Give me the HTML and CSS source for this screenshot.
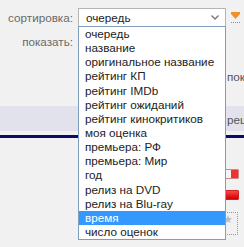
FILE: index.html
```html
<!DOCTYPE html>
<html lang="ru">
<head>
  <meta charset="UTF-8" />
  <title>Сортировка</title>
  <link rel="stylesheet" href="styles.css">
</head>
<body>

  <div class="page">
    <div class="filters">
      <div class="row">
        <span class="label">сортировка:</span>
        <div class="select">
          <span>очередь</span>
          <svg class="chevron" width="8" height="5" viewBox="0 0 8 5"><path d="M0.5 0.5 L4 4 L7.5 0.5" fill="none" stroke="#777" stroke-width="1.4"/></svg>
        </div>
        <span class="sort-dir">
          <svg width="9" height="8" viewBox="0 0 9 8"><rect x="0" y="0" width="9" height="2" fill="#f0902a"/><path d="M0 2 L9 2 L4.5 7 Z" fill="#f0902a"/></svg>
        </span>
      </div>
      <div class="row row-show">
        <span class="label">показать:</span>
      </div>
      <div class="row row-cut">
        <span class="cut">пока</span>
      </div>
    </div>

    <div class="band"><span class="cut">рец</span></div>
    <div class="rule"></div>

    <div class="items">
      <div class="bar bar-light"></div>
      <div class="bar bar-red"></div>
      <div class="star-box">★</div>
    </div>

    <ul class="dropdown">
      <li>очередь</li>
      <li>название</li>
      <li>оригинальное название</li>
      <li>рейтинг КП</li>
      <li>рейтинг IMDb</li>
      <li>рейтинг ожиданий</li>
      <li>рейтинг кинокритиков</li>
      <li>моя оценка</li>
      <li>премьера: РФ</li>
      <li>премьера: Мир</li>
      <li>год</li>
      <li>релиз на DVD</li>
      <li>релиз на Blu-ray</li>
      <li class="active">время</li>
      <li>число оценок</li>
    </ul>
  </div>

</body>
</html>
```

FILE: styles.css
```css
body {
  margin: 0;
  font-family: Arial, "Liberation Sans", sans-serif;
  font-size: 11.7px;
  background: #f1f1f1;
}

.page {
  position: relative;
  height: 247px;
  overflow: hidden;
}

.filters {
  padding-top: 8px;
}

.row {
  display: flex;
  align-items: center;
  height: 19px;
}

.label {
  width: 73px;
  text-align: right;
  color: #6a6a6a;
}

.select {
  margin-left: 5px;
  height: 17px;
  width: 133px;
  border: 1px solid #b4b4b4;
  background: #fff;
  display: flex;
  align-items: center;
  justify-content: space-between;
  padding: 0 6px 0 7px;
  color: #222;
}

.chevron {
  display: block;
}

.sort-dir {
  margin-left: 5px;
  padding-bottom: 2px;
  border-bottom: 1px dotted #c08050;
  line-height: 0;
}

.row-show {
  margin-top: 7px;
  height: 15px;
}

.row-cut {
  margin-top: 20px;
  height: 15px;
}

.cut {
  margin-left: 227px;
  color: #555;
  white-space: nowrap;
}

.band {
  margin-top: 22px;
  height: 25px;
  background: #e2e2ec;
  display: flex;
  align-items: center;
  padding-top: 1px;
  box-sizing: border-box;
}

.rule {
  margin-top: 4px;
  height: 3px;
  background: #0b0b6b;
}

.items {
  padding: 31px 0 0 200px;
}

.bar {
  width: 39px;
  height: 10px;
  border: 1px solid #c22;
  box-sizing: border-box;
  border-radius: 1px;
}

.bar-light {
  background: linear-gradient(to right, #f4f4f4 0, #f4f4f4 80%, #e33 80%);
  border-color: #c88;
}

.bar-red {
  margin-top: 11px;
  background: linear-gradient(#f44, #c00);
}

.star-box {
  margin-top: 12px;
  width: 38px;
  height: 23px;
  border: 1px dotted #999;
  color: #bbb;
  text-align: right;
  padding-right: 4px;
  box-sizing: border-box;
  font-size: 11px;
}

.dropdown {
  position: absolute;
  left: 78px;
  top: 26px;
  width: 146px;
  margin: 0;
  padding: 0;
  list-style: none;
  background: #fff;
  border: 1px solid #7f9dbd;
}

.dropdown li {
  height: 14.15px;
  line-height: 14px;
  padding-left: 6px;
  color: #222;
  white-space: nowrap;
}

.dropdown li.active {
  background: #3399ff;
  color: #fff;
}
```
